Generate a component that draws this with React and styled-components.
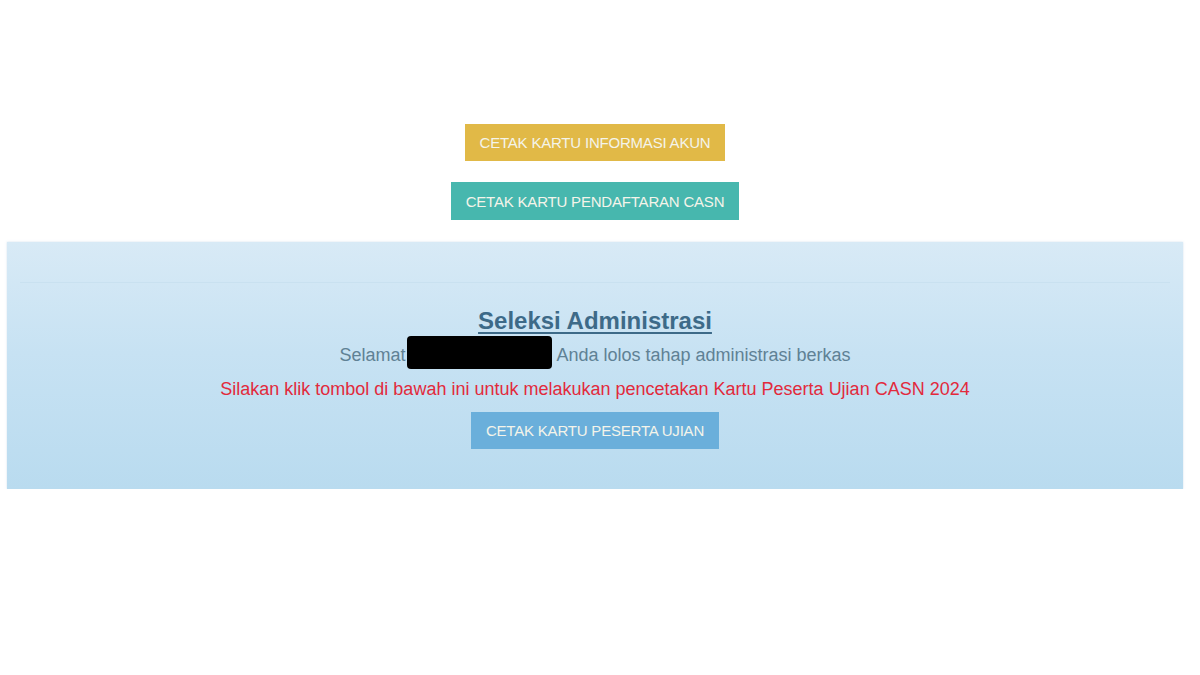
import React from 'react';
import styled, { createGlobalStyle } from 'styled-components';

const GlobalStyle = createGlobalStyle`
  html, body {
    margin: 0;
    padding: 0;
    background: #ffffff;
    font-family: "Liberation Sans", Arial, sans-serif;
  }
`;

const Page = styled.div`
  width: 1190px;
  padding: 124px 7px 0;
  box-sizing: border-box;
  display: flex;
  flex-direction: column;
  align-items: center;
`;

const ActionStack = styled.div`
  display: flex;
  flex-direction: column;
  align-items: center;
  gap: 21px;
  margin-bottom: 22px;
`;

const PrintButton = styled.button`
  border: none;
  border-radius: 0;
  height: ${props => props.$height || 37}px;
  padding: 0 15px;
  background: ${props => props.$bg};
  color: #f4f4ea;
  font-family: "Liberation Sans", Arial, sans-serif;
  font-size: 15px;
  letter-spacing: -0.2px;
  text-transform: uppercase;
  cursor: pointer;
`;

const Panel = styled.section`
  width: 100%;
  height: 247px;
  background: linear-gradient(to bottom, #d8eaf6 0%, #c7e2f3 45%, #b9dbef 100%);
  box-shadow: 0 0 2px rgba(180, 205, 225, 0.6);
`;

const PanelHeading = styled.div`
  height: 40px;
  margin: 0 13px;
  border-bottom: 1px solid #c9e1f0;
`;

const PanelBody = styled.div`
  display: flex;
  flex-direction: column;
  align-items: center;
  padding-top: 24px;
`;

const Title = styled.h3`
  margin: 0;
  font-size: 24px;
  font-weight: bold;
  line-height: 28px;
  color: #3d6a88;
  text-decoration: underline;
  text-underline-offset: 3px;
  text-decoration-thickness: 2px;
`;

const Greeting = styled.p`
  margin: 0;
  display: flex;
  align-items: center;
  font-size: 18px;
  line-height: 40px;
  color: #5f8195;
`;

const Redacted = styled.span`
  display: inline-block;
  width: 145px;
  height: 33px;
  background: #000;
  border-radius: 4px;
  margin: 0 4px 6px 2px;
`;

const Notice = styled.p`
  margin: 0 0 9px;
  font-size: 18px;
  line-height: 28px;
  color: #e22a3c;
`;

export default function App() {
  return (
    <>
      <GlobalStyle />
      <Page>
        <ActionStack>
          <PrintButton $bg="#e1b947">Cetak Kartu Informasi Akun</PrintButton>
          <PrintButton $bg="#47b7ae" $height={38}>Cetak Kartu Pendaftaran CASN</PrintButton>
        </ActionStack>
        <Panel>
          <PanelHeading />
          <PanelBody>
            <Title>Seleksi Administrasi</Title>
            <Greeting>
              Selamat<Redacted />Anda lolos tahap administrasi berkas
            </Greeting>
            <Notice>
              Silakan klik tombol di bawah ini untuk melakukan pencetakan Kartu Peserta Ujian CASN 2024
            </Notice>
            <PrintButton $bg="#6aafdb">Cetak Kartu Peserta Ujian</PrintButton>
          </PanelBody>
        </Panel>
      </Page>
    </>
  );
}
